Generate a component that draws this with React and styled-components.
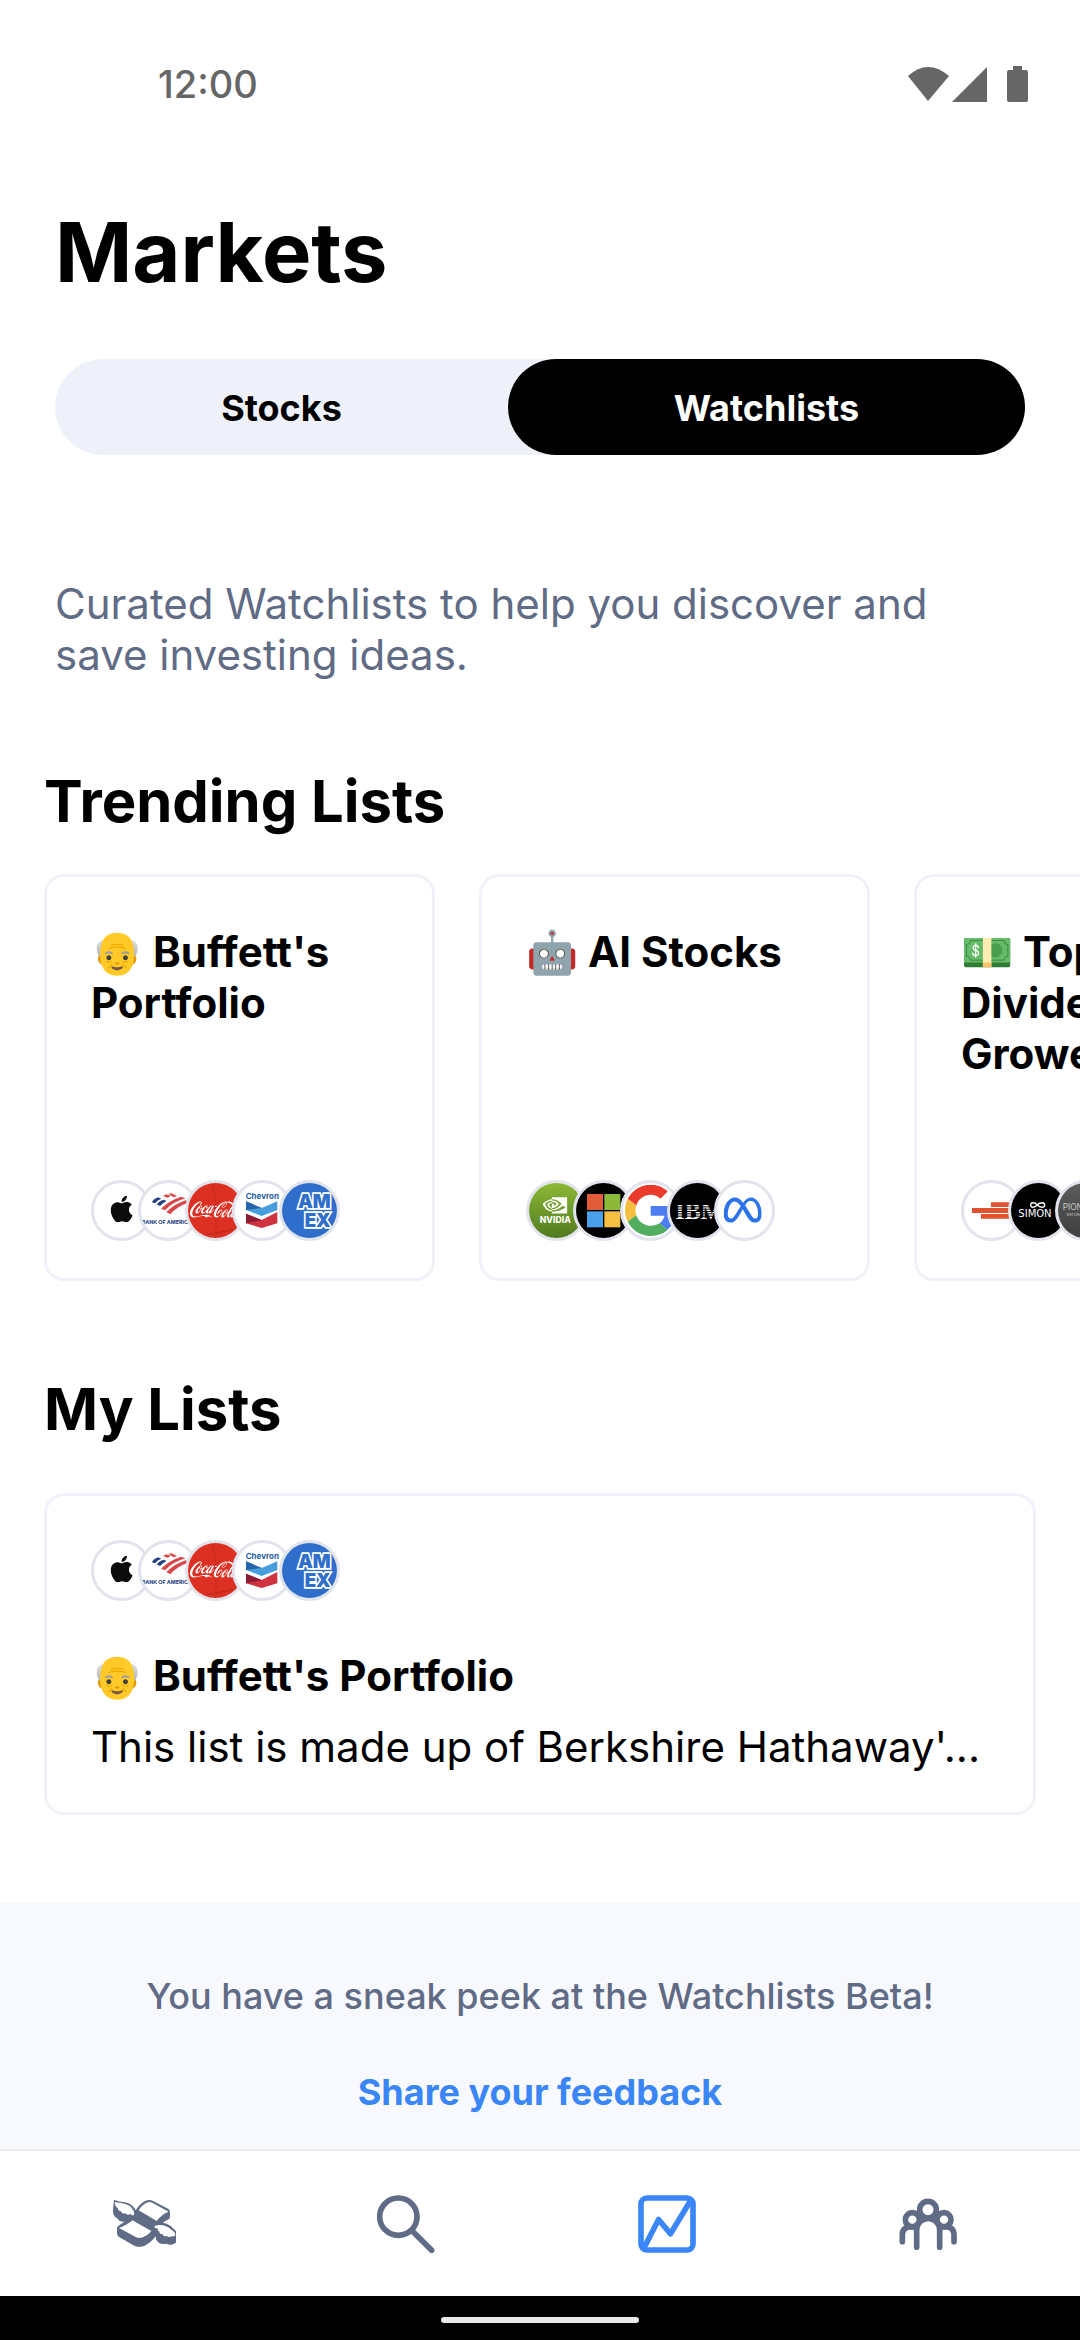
import React, { useState } from "react";
import styled, { createGlobalStyle } from "styled-components";
import { SiApple, SiCocacola, SiMeta, SiNvidia } from "react-icons/si";

const LOGO_FONT = '"Inter", sans-serif';

const AppleLogo = () => (
  <LogoSvg>
    <SiApple x="43" y="38" size={80} color="#0b0b0b" />
  </LogoSvg>
);

const BankLogo = () => (
  <LogoSvg>
    <g fill="#21407f">
      <path d="M32 57 Q40 47 51 43 L61 47 Q50 51 42 61Z" />
      <path d="M47 64 Q56 54 67 50 L77 54 Q66 59 57 69Z" />
    </g>
    <g fill="#d9474a">
      <path d="M66 39 L76 34 L90 39 L80 44Z" />
      <path d="M82 32 L92 31 L108 39 L98 43Z" />
      <path d="M60 77 Q84 53 120 41 L134 46 Q94 57 72 82Z" />
      <path d="M76 87 Q100 63 134 52 L146 58 Q108 70 88 94Z" />
    </g>
    <text x="2" y="123" fontSize="16" fontWeight="700" fontFamily={LOGO_FONT} fill="#21407f">
      BANK OF AMERICA
    </text>
  </LogoSvg>
);

const CokeLogo = () => (
  <LogoSvg>
    <rect width="165" height="165" fill="#dc3023" />
    <path d="M72 0 L84 60 L84 165" stroke="#c52a1e" strokeWidth="3" fill="none" />
    <path d="M58 154 L150 138" stroke="#a82118" strokeWidth="3" strokeDasharray="7 5" />
    <SiCocacola x="6" y="2" size={156} color="#fff" />
  </LogoSvg>
);

const ChevronLogo = () => (
  <LogoSvg>
    <text x="32" y="48" fontSize="24" fontWeight="700" fontFamily={LOGO_FONT} fill="#1f5fa8">
      Chevron
    </text>
    <path d="M33 55 L80 75 L127 55 V81 L80 99 L33 81Z" fill="#469fdc" />
    <path d="M33 55 L80 75 L33 81Z" fill="#2766ae" />
    <path d="M33 92 L80 111 L127 87 V121 L80 135 L33 121Z" fill="#d1323f" />
    <path d="M33 92 L80 111 L33 121Z" fill="#8d1b33" />
  </LogoSvg>
);

const AmexLogo = () => (
  <LogoSvg>
    <rect width="165" height="165" fill="#2f6ecb" />
    <g
      fontSize="56"
      fontWeight="900"
      fontFamily={LOGO_FONT}
      fill="#2f6ecb"
      stroke="#fff"
      strokeWidth="10"
      paintOrder="stroke"
    >
      <text x="48" y="76">AM</text>
      <text x="68" y="132">EX</text>
    </g>
  </LogoSvg>
);

const NvidiaLogo = () => (
  <LogoSvg>
    <defs>
      <linearGradient id="nvidia" x1="0" y1="0" x2="0" y2="1">
        <stop offset="0" stopColor="#8cb936" />
        <stop offset="1" stopColor="#507a20" />
      </linearGradient>
    </defs>
    <rect width="165" height="165" fill="url(#nvidia)" />
    <SiNvidia x="41" y="30" size={74} color="#fff" />
    <text x="32" y="120" fontSize="26" fontWeight="800" fontFamily={LOGO_FONT} fill="#fff">
      NVIDIA
    </text>
  </LogoSvg>
);

const MicrosoftLogo = () => (
  <LogoSvg>
    <rect width="165" height="165" fill="#000" />
    <rect x="33" y="33" width="48" height="48" fill="#e15c39" />
    <rect x="85" y="33" width="48" height="48" fill="#8cba38" />
    <rect x="33" y="85" width="48" height="48" fill="#4aa0e9" />
    <rect x="85" y="85" width="48" height="48" fill="#f6be43" />
  </LogoSvg>
);

const GoogleLogo = () => (
  <LogoSvg>
    <svg x="6" y="5" width="154" height="154" viewBox="0 0 48 48">
      <path
        fill="#e93a2b"
        d="M24 9.5c3.54 0 6.71 1.22 9.21 3.6l6.85-6.85C35.9 2.38 30.47 0 24 0 14.62 0 6.51 5.38 2.56 13.22l7.98 6.19C12.43 13.72 17.74 9.5 24 9.5z"
      />
      <path
        fill="#4d7df2"
        d="M46.98 24.55c0-1.57-.15-3.09-.38-4.55H24v9.02h12.94c-.58 2.96-2.26 5.48-4.78 7.18l7.73 6c4.51-4.18 7.09-10.36 7.09-17.65z"
      />
      <path
        fill="#f5be41"
        d="M10.53 28.59c-.48-1.45-.76-2.99-.76-4.59s.27-3.14.76-4.59l-7.98-6.19C.92 16.46 0 20.12 0 24c0 3.88.92 7.54 2.56 10.78l7.97-6.19z"
      />
      <path
        fill="#51ae60"
        d="M24 48c6.48 0 11.93-2.13 15.89-5.81l-7.73-6c-2.15 1.45-4.92 2.3-8.16 2.3-6.26 0-11.57-4.22-13.47-9.91l-7.98 6.19C6.51 42.62 14.62 48 24 48z"
      />
    </svg>
  </LogoSvg>
);

const IbmLogo = () => (
  <LogoSvg>
    <rect width="165" height="165" fill="#000" />
    <text
      x="16"
      y="107"
      fontSize="72"
      fontWeight="700"
      fontFamily='"Liberation Serif", serif'
      fill="#fff"
    >
      IBM
    </text>
    {[63, 70, 77, 84, 91, 98].map((y) => (
      <rect key={y} y={y} width="165" height="3" fill="#000" />
    ))}
  </LogoSvg>
);

const MetaLogo = () => (
  <LogoSvg>
    <SiMeta x="20" y="24" size={114} color="#2b73ea" />
  </LogoSvg>
);

const BarsLogo = () => (
  <LogoSvg>
    <path d="M81 58h60v14h-60z M24 75h117v15h-117z M51 93h90v14h-90z" fill="#e0512f" />
  </LogoSvg>
);

const SimonLogo = () => (
  <LogoSvg>
    <rect width="165" height="165" fill="#000" />
    <path
      d="M79 66 C71 57 59 57 59 66 S71 75 79 66 C87 57 101 57 101 66 S87 75 79 66Z"
      fill="none"
      stroke="#fff"
      strokeWidth="4"
    />
    <text x="22" y="101" fontSize="30" fontFamily='"DejaVu Sans", sans-serif' fill="#fff">
      SIMON
    </text>
  </LogoSvg>
);

const PioneerLogo = () => (
  <LogoSvg>
    <defs>
      <linearGradient id="pioneer" x1="0" y1="0" x2="0" y2="1">
        <stop offset="0" stopColor="#5c5c5c" />
        <stop offset="1" stopColor="#3f3f3f" />
      </linearGradient>
    </defs>
    <rect width="165" height="165" fill="url(#pioneer)" />
    <g fontFamily={LOGO_FONT} fill="#c9c9c9">
      <text x="14" y="82" fontSize="25">PIONEER</text>
      <text x="26" y="100" fontSize="11">NATURAL</text>
    </g>
  </LogoSvg>
);

const LOGOS = {
  apple: AppleLogo,
  bank: BankLogo,
  coke: CokeLogo,
  chevron: ChevronLogo,
  amex: AmexLogo,
  nvidia: NvidiaLogo,
  microsoft: MicrosoftLogo,
  google: GoogleLogo,
  ibm: IbmLogo,
  meta: MetaLogo,
  bars: BarsLogo,
  simon: SimonLogo,
  pioneer: PioneerLogo,
};

const BUFFETT = ["apple", "bank", "coke", "chevron", "amex"];

const TRENDING = [
  { title: "👴 Buffett's Portfolio", logos: BUFFETT },
  { title: "🤖 AI Stocks", logos: ["nvidia", "microsoft", "google", "ibm", "meta"] },
  { title: "💵 Top Dividend Growers", logos: ["bars", "simon", "pioneer"] },
];

const MoneyIcon = () => (
  <svg width="63" height="47" viewBox="99 97 189 141" aria-hidden="true">
    <path
      fill="currentColor"
      d="M102 96 C112 103 132 101 146 107 Q162 116 167 128 Q186 98 207 97 Q214 97 221 101 L264 123 Q270 126 270 132 V148 Q270 153 264 156 Q254 159 249 166 Q268 168 279 182 Q289 188 289 196 V222 Q288 229 275 231 Q266 232 259 228 Q246 231 238 226 Q228 222 227 206 Q206 234 184 237 Q174 239 163 234 L116 207 Q111 204 111 197 V180 Q112 174 134 162 Q118 164 112 152 Q98 146 99 128Z"
    />
    <g fill="#fff">
      <path d="M104 103 C124 107 146 107 155 121 Q164 131 163 140 Q158 147 151 139 Q141 144 136 137 Q126 140 123 131 Q115 131 114 122 Q105 117 104 103Z" />
      <path d="M176 128 Q192 104 208 103 Q212 103 218 106 L266 132 Q244 140 230 160Z" />
      <path d="M157 158 L214 190 Q202 205 184 210 Q174 212 166 207 L117 181 Q144 171 157 158Z" />
      <path d="M223 175 Q252 166 274 186 Q286 194 286 201 Q284 208 275 206 Q267 210 260 205 Q250 208 248 200 Q237 200 238 191 Q231 190 235 183 Q223 183 223 175Z" />
    </g>
  </svg>
);

const SearchIcon = () => (
  <svg width="58" height="58" viewBox="888 73 174 174" fill="none" aria-hidden="true">
    <g stroke="currentColor" strokeWidth="17" strokeLinecap="round">
      <circle cx="952" cy="138" r="56" />
      <path d="M996 183 L1052 239" />
    </g>
  </svg>
);

const ChartIcon = () => (
  <svg width="58" height="58" viewBox="172 72 175 175" fill="none" aria-hidden="true">
    <g stroke="currentColor" strokeWidth="17" strokeLinejoin="round">
      <rect x="181" y="81" width="157" height="157" rx="18" />
      <path d="M190 232 L234 146 L270 189 L330 90" />
    </g>
  </svg>
);

const PeopleIcon = () => (
  <svg width="58" height="52" viewBox="955 82 174 156" fill="none" aria-hidden="true">
    <g stroke="currentColor" strokeWidth="17" strokeLinecap="round">
      <circle cx="1042" cy="117" r="25" />
      <circle cx="995" cy="147" r="21" />
      <circle cx="1090" cy="147" r="21" />
      <path d="M1008 230 V178 A34 34 0 0 1 1077 178 V230" />
      <path d="M965 213 V193 Q965 169 990 169 H1008" />
      <path d="M1120 213 V193 Q1120 169 1096 169 H1077" />
    </g>
  </svg>
);

const NAV_ITEMS = [
  { label: "Invest", Icon: MoneyIcon },
  { label: "Search", Icon: SearchIcon },
  { label: "Markets", Icon: ChartIcon, active: true },
  { label: "Community", Icon: PeopleIcon },
];

const Logos = ({ names }) => (
  <LogoRow>
    {names.map((name) => {
      const Logo = LOGOS[name];
      return (
        <LogoCircle key={name}>
          <Logo />
        </LogoCircle>
      );
    })}
  </LogoRow>
);

const App = () => {
  const [tab, setTab] = useState("Watchlists");

  return (
    <Page>
      <GlobalStyle />
      <StatusBar>
        <Clock>12:00</Clock>
        <StatusIcons>
          <svg width="41" height="35" viewBox="0 0 41 35" aria-hidden="true">
            <path d="M0 9 Q20 -9 41 9 L20 34Z" fill="currentColor" />
          </svg>
          <svg width="35" height="35" viewBox="0 0 35 35" aria-hidden="true">
            <path d="M35 0 V35 H0Z" fill="currentColor" />
          </svg>
          <Battery width="21" height="36" viewBox="0 0 21 36" aria-hidden="true">
            <path
              d="M6 0h9v4h4q2 0 2 2v28q0 2-2 2h-17q-2 0-2-2v-28q0-2 2-2h4z"
              fill="currentColor"
            />
          </Battery>
        </StatusIcons>
      </StatusBar>

      <Header>
        <Title>Markets</Title>
        <Segmented>
          <Segment $flex={453} $active={tab === "Stocks"} onClick={() => setTab("Stocks")}>
            Stocks
          </Segment>
          <Segment $flex={517} $active={tab === "Watchlists"} onClick={() => setTab("Watchlists")}>
            Watchlists
          </Segment>
        </Segmented>
        <Intro>Curated Watchlists to help you discover and save investing ideas.</Intro>
      </Header>

      <Section $top="86px">
        <SectionTitle>Trending Lists</SectionTitle>
        <Carousel>
          {TRENDING.map((list) => (
            <TrendingCard key={list.title}>
              <CardTitle>{list.title}</CardTitle>
              <Logos names={list.logos} />
            </TrendingCard>
          ))}
        </Carousel>
      </Section>

      <Section $top="93px">
        <SectionTitle>My Lists</SectionTitle>
        <ListCard>
          <Logos names={BUFFETT} />
          <ListText>
            <CardTitle>👴 Buffett's Portfolio</CardTitle>
            <Description>This list is made up of Berkshire Hathaway'...</Description>
          </ListText>
        </ListCard>
      </Section>

      <Feedback>
        <p>You have a sneak peek at the Watchlists Beta!</p>
        <FeedbackLink href="#feedback">Share your feedback</FeedbackLink>
      </Feedback>

      <Nav>
        {NAV_ITEMS.map(({ label, Icon, active }) => (
          <NavButton key={label} aria-label={label} $active={active}>
            <Icon />
          </NavButton>
        ))}
      </Nav>
      <GestureBar>
        <Handle />
      </GestureBar>
    </Page>
  );
};

export default App;

const GlobalStyle = createGlobalStyle`
  * {
    box-sizing: border-box;
  }
  body {
    margin: 0;
    background: #fff;
    font-family: "Inter", sans-serif;
    color: #000;
  }
  h1, h2, h3, p {
    margin: 0;
  }
  button {
    border: 0;
    padding: 0;
    background: none;
    font-family: inherit;
    cursor: pointer;
  }
`;

const Page = styled.div`
  display: flex;
  flex-direction: column;
  min-height: 100vh;
  overflow: hidden;
`;

const StatusBar = styled.div`
  display: flex;
  align-items: center;
  justify-content: space-between;
  height: 168px;
  padding: 0 52px 0 158px;
  color: #666;
`;

const Clock = styled.span`
  font-size: 38px;
  line-height: 46px;
  font-weight: 500;
`;

const StatusIcons = styled.div`
  display: flex;
  align-items: center;
  gap: 3px;
`;

const Battery = styled.svg`
  margin-left: 17px;
`;

const Header = styled.header`
  padding: 33px 55px 0;
`;

const Title = styled.h1`
  font-size: 83px;
  line-height: 102px;
  font-weight: 700;
`;

const Segmented = styled.div`
  display: flex;
  margin-top: 56px;
  border-radius: 48px;
  background: #eef1f9;
`;

const Segment = styled.button`
  flex: ${(props) => props.$flex} 1 0;
  height: 96px;
  padding-top: 2px;
  border-radius: 48px;
  font-size: 36px;
  font-weight: 700;
  color: ${(props) => (props.$active ? "#fff" : "#000")};
  background: ${(props) => (props.$active ? "#000" : "transparent")};
`;

const Intro = styled.p`
  margin-top: 123px;
  font-size: 42px;
  line-height: 51px;
  font-weight: 400;
  color: #606b85;
`;

const Section = styled.section`
  margin-top: ${(props) => props.$top};
  padding: 0 44px;
`;

const SectionTitle = styled.h2`
  font-size: 58px;
  line-height: 70px;
  font-weight: 700;
`;

const Carousel = styled.div`
  display: flex;
  gap: 44px;
  margin-top: 38px;
`;

const Card = styled.article`
  display: flex;
  flex-direction: column;
  border: 3px solid #eff2f8;
  border-radius: 20px;
`;

const TrendingCard = styled(Card)`
  flex: 0 0 391px;
  height: 407px;
  justify-content: space-between;
  padding: 49px 44px 37px;
`;

const ListCard = styled(Card)`
  gap: 49px;
  margin-top: 49px;
  padding: 44px 44px 40px;
`;

const ListText = styled.div`
  display: flex;
  flex-direction: column;
  gap: 20px;
`;

const CardTitle = styled.h3`
  font-size: 42px;
  line-height: 51px;
  font-weight: 700;
`;

const Description = styled.p`
  overflow: hidden;
  font-size: 42px;
  line-height: 51px;
  font-weight: 400;
  white-space: nowrap;
  text-overflow: ellipsis;
`;

const LogoRow = styled.div`
  display: flex;
`;

const LogoCircle = styled.span`
  display: flex;
  flex: none;
  width: 61px;
  height: 61px;
  margin-right: -14px;
  border: 3px solid #e1e4ed;
  border-radius: 50%;
  background: #fff;
  overflow: hidden;
`;

const LogoSvg = styled.svg.attrs({ viewBox: "0 0 165 165", "aria-hidden": true })`
  width: 55px;
  height: 55px;
`;

const Feedback = styled.footer`
  display: flex;
  flex-direction: column;
  align-items: center;
  gap: 52px;
  margin-top: 88px;
  padding: 71px 44px 35px;
  background: #f8f9ff;
  font-size: 36px;
  line-height: 44px;
  font-weight: 500;
  color: #606b85;
`;

const FeedbackLink = styled.a`
  font-weight: 700;
  color: #3b86f7;
  text-decoration: none;
`;

const Nav = styled.nav`
  display: flex;
  height: 147px;
  padding: 0 22px 0 14px;
  border-top: 2px solid #eceef3;
`;

const NavButton = styled.button`
  display: flex;
  flex: 1;
  align-items: center;
  justify-content: center;
  color: ${(props) => (props.$active ? "#3b86f7" : "#606b85")};
`;

const GestureBar = styled.div`
  display: flex;
  align-items: center;
  justify-content: center;
  height: 44px;
  padding-top: 4px;
  background: #000;
`;

const Handle = styled.div`
  width: 198px;
  height: 6px;
  border-radius: 3px;
  background: #e9e9e9;
`;
